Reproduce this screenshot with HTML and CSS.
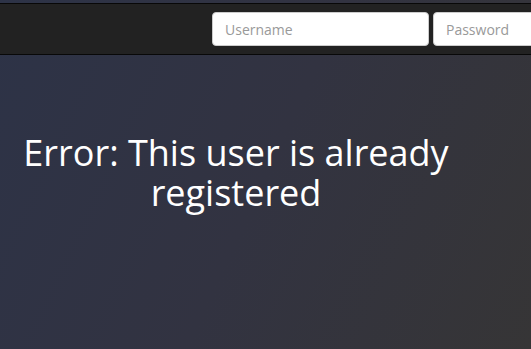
FILE: index.html
```html
<!DOCTYPE html>
<html>
<head>
<meta charset="utf-8">
<link rel="stylesheet" href="styles.css">
</head>
<body>
<nav class="navbar">
  <form class="login">
    <input class="field" type="text" placeholder="Username">
    <input class="field" type="password" placeholder="Password">
  </form>
</nav>
<main class="content">
  <h1 class="message">Error: This user is already registered</h1>
</main>
</body>
</html>
```
FILE: styles.css
```css
html, body {
  margin: 0;
  height: 100%;
}
body {
  padding-top: 3px;
  box-sizing: border-box;
  overflow: hidden;
  font-family: "Open Sans", "DejaVu Sans", sans-serif;
  background: linear-gradient(115deg, #2d3347 0%, #323341 50%, #363536 100%);
  color: #fff;
}
.navbar {
  background: #222;
  border-top: 1px solid #080808;
  border-bottom: 1px solid #080808;
  height: 50px;
  box-sizing: content-box;
  overflow: hidden;
}
.login {
  display: flex;
  gap: 4px;
  margin: 0;
  padding: 8px 0 0 212px;
  flex-wrap: nowrap;
  overflow: hidden;
}
.field {
  flex: none;
  width: 217px;
  height: 34px;
  box-sizing: border-box;
  padding: 6px 12px;
  border: 1px solid #ccc;
  border-radius: 4px;
  background: #fff;
  font-family: "Open Sans", sans-serif;
  font-size: 14px;
  color: #555;
  outline: none;
}
.field::placeholder {
  color: #999;
}
.content {
  padding-top: 78px;
}
.message {
  margin: 0 0 0 15px;
  width: 442px;
  text-align: center;
  font-size: 36px;
  font-weight: 400;
  line-height: 1.1;
}
```
